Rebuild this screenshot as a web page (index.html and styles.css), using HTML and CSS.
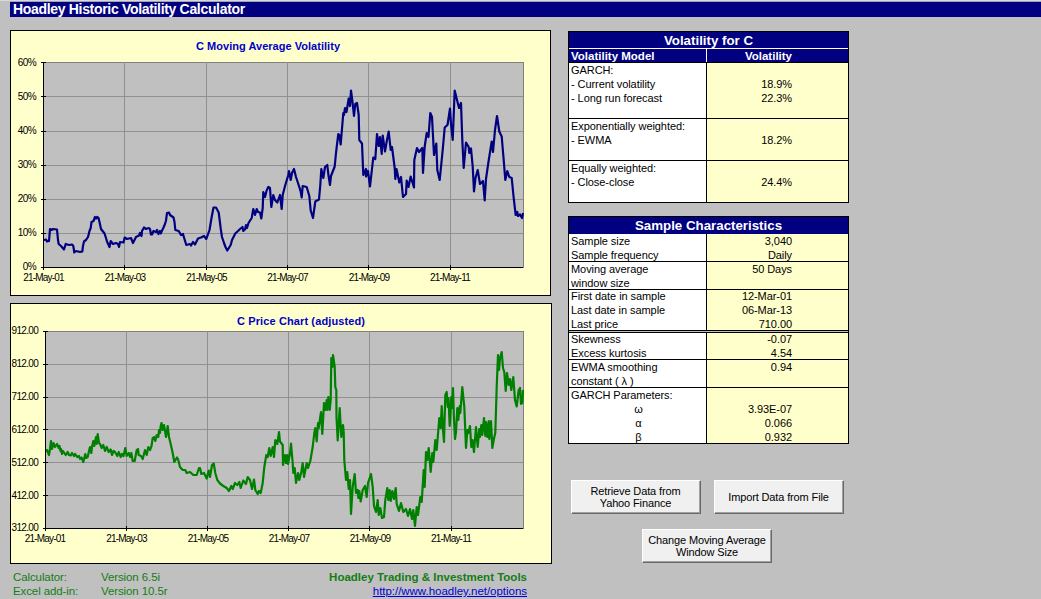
FILE: index.html
```html
<!DOCTYPE html>
<html lang="en">
<head>
    <meta charset="UTF-8">
    <meta name="viewport" content="width=device-width, initial-scale=1.0">
    <title>Hoadley Historic Volatility Calculator</title>
    <link rel="stylesheet" href="styles.css">
</head>

<body>
    <h1 class="page-title"><span>Hoadley Historic Volatility Calculator</span></h1>

    <div class="sheet">
        <!-- Charts and version info -->
        <div class="charts">
            <svg class="chart chart-volatility" viewBox="10 30 541 266">
                <rect class="chart-area" x="10.5" y="30.5" width="540" height="265"/>
                <text class="chart-title" x="196" y="50" textLength="144">C Moving Average Volatility</text>
                <rect class="plot" x="43.5" y="62.5" width="480" height="205"/>
                <path class="grid" d="M43 96.5H523M43 131.5H523M43 165.5H523M43 199.5H523M43 233.5H523M124.5 62V267M206.5 62V267M287.5 62V267M368.5 62V267M450.5 62V267"/>
                <polyline class="line-volatility" points="43.7,240 46,239.5 47,241.5 49,241 50,229 51.5,230 53,229 57,229.5 58,240 58.7,244 61,246 64,249.5 65.7,244 69,245 72,244.5 73.3,246 74.3,252.5 76,251 80,252 82.3,251.5 83,246 84,241.5 86,240 88,237 89.5,231 90.7,228 91.5,222 93.5,221 95,217 96,218.5 97,217 98.5,218 99.5,222 101,229 104.5,233.5 106,238 107,241.5 109.5,247 110.7,241 113,244 116,243 118,244 119,247 120,242 123.5,242.5 124.7,237.5 127,239 131,238 133,243 136,237 139,235.5 140,233 141.5,236 142,231 144,227.5 146,229 149,228 150,229 151,234.5 152,234.5 153.5,231 156,232 157,230 158.5,234 160,231 160.7,233.5 163.5,227.5 165,224 166,220.5 167,213 169,212.5 170,215 173.5,217.5 174.5,222 175.3,230 178.7,231 181,235 183,234 184,237.5 186.3,245 190,244 191,245.5 193,242 195,244.5 198,238.5 201,237.5 204,236 206.3,239 209.5,230 211.5,218 213.5,207.5 216,207.5 218.7,212.5 220.7,228.5 222,237 224,243 225.5,247 227.3,250.5 230.7,245 232,240 235.3,233.5 238,231 240,229 242.5,227 243.3,231 245,229.5 246,225 247,228 248.5,223 251.7,218 253.3,209 255,215 256.7,209 258,212 260,212.5 261.3,218.5 262.7,208 263.3,192 265,197 266.5,191 268.3,187 270,188 271.3,207 273.3,195 275,200 277.3,202.5 280,195 281.7,209 282.7,195 284,190 285.3,185 288.3,175 289,171 290.7,180 292,173 294,169 296,177 298,183 300.7,191.5 301.7,197.5 302.7,186 306.7,187 309.3,196 310.7,210.5 313,218 315.3,201.5 319,199.5 320.3,185 321.3,169 323.3,178 325,167 327.3,165 328.3,174 330,185 331,176 334.7,166.5 336,153 338.3,134 339.3,135 340.7,144.5 343.3,113 344,115 345,108 346.5,112 348.7,98.5 350,106 351,90.5 352.5,102 354,116 355.3,104 357,103 358.7,115 359.3,140 362,143.5 363.3,175 366,169 366,176.5 368,171 370,186.5 373.3,157.5 375.3,159 377,134 378.7,146 380,137 381.7,154 382.7,135.5 385,151.5 386.7,141.5 388.7,131.5 390.7,150 392,147 394.7,168 395.3,179 396.5,169 399.3,182.5 401,177 403,197 406,194 406.7,180.5 408.5,187 410.7,176.5 414,187.5 414.3,160 417,148 419,152 422.3,148 423,173 424.7,146.5 426.7,133 428.5,137 430.3,113 432,117 434,155 436.3,143.5 437.3,170 439.7,180 442.7,150 444.7,127.5 447.5,125 450,108.5 451,124 452.7,140 454.7,90.5 457.5,102 459,108 461,103 462.3,140 463.7,168 466,142.5 468.7,147 469.3,153 471,148.5 472.7,166.5 474,191.5 475.5,178 477.7,170 480,184 483,181 484.7,200.5 486,179 488.3,163 491.7,141.5 493,152 495,130 497,116 499.3,131.5 501.7,136.5 503.7,160 505.3,180 507.3,171 509.3,177 511.7,178 513.7,198 515.7,215 517.3,212 518,216 520,214.5 522,218 523,213"/>
                <path class="axis" d="M43.5 62V267.5H523M41 62.5H46M41 96.5H46M41 131.5H46M41 165.5H46M41 199.5H46M41 233.5H46M41 267.5H46M43.5 265V270M124.5 265V270M206.5 265V270M287.5 265V270M368.5 265V270M450.5 265V270"/>
                <g class="tick tick-y">
                    <text x="36" y="66">60%</text>
                    <text x="36" y="100">50%</text>
                    <text x="36" y="134">40%</text>
                    <text x="36" y="168">30%</text>
                    <text x="36" y="202">20%</text>
                    <text x="36" y="236">10%</text>
                    <text x="36" y="270">0%</text>
                </g>
                <g class="tick tick-x">
                    <text x="43.5" y="281">21-May-01</text>
                    <text x="125" y="281">21-May-03</text>
                    <text x="206.5" y="281">21-May-05</text>
                    <text x="287.5" y="281">21-May-07</text>
                    <text x="369" y="281">21-May-09</text>
                    <text x="450" y="281">21-May-11</text>
                </g>
            </svg>

            <svg class="chart chart-price" viewBox="10 303 542 261">
                <rect class="chart-area" x="10.5" y="303.5" width="541" height="260"/>
                <text class="chart-title" x="237" y="325" textLength="128">C Price Chart (adjusted)</text>
                <rect class="plot" x="45.5" y="331.5" width="478" height="197"/>
                <path class="grid" d="M45 364.5H523M45 397.5H523M45 429.5H523M45 462.5H523M45 495.5H523M126.5 331V528M207.5 331V528M288.5 331V528M369.5 331V528M451.5 331V528"/>
                <polyline class="line-price" points="45.7,451.5 47,450 49,455 50,449 51,441 52,449 53.5,443 55,447 57,444 58.7,448 59.5,446 60.5,451 61,449 62,454 63,451 65.7,455 67.7,452 69,455 70.7,455.5 72,453 74,456 75,454 77.3,457 79,456 80,459 81.5,457.5 83.3,462 85.3,454 86,458 87.7,457 89,451 90,447 91.3,453 92,447 93.3,441 94.3,446 96,437 96.7,444 97.7,434 99,443 100,444 101.7,448 103.3,445 105,451 106.7,447 108.7,452 110.7,449.5 112,455 113.5,451 115,452 117.3,456 118.7,452 120.7,457 122,454 123.5,456 125.3,448 126.7,456 128.7,453 130,457 131.3,453 132.7,461 134.7,461 136.7,450 138,449 138.7,455 141,456 142.7,459 144,454 145,450 146.7,455 148.3,447 150,450 151.5,446 152.7,438 154,437 155.3,441 156.7,435 158.3,437 159,430 160,433 160.7,426 161.5,423 162.7,430 164,425 166,437 167.7,426 169,437 170.7,444 172.7,453 174.3,462 176,459 177,457.5 178.3,460 180,467 182.7,470 185.3,470 186.7,473 190,472 193.3,475 196.7,475 198,471 199,468 200,468 201.3,474 204,473 206.7,478.5 208.7,470.5 210,477 212,465 213.7,463.5 215.3,473 217.3,480 220,483.5 223.3,486 226.7,488 229,491 231.3,486 232.7,489 235,483 237.3,485 239.3,482 240.7,488 243.3,480.5 246,484 247.7,477 250,480 252,489 254,479.5 255.3,490 257.7,494 259,491 260.7,493 262.7,483 264.3,467 266.3,455 267.7,457 269.3,448 270.7,456 272.7,447 274,457 275.3,440 277.3,444 279,432 280,441.5 282.7,445 283,465 285,455 286,463 287.3,455 288,464 290,453 291,443.5 292.7,463 293.3,473 294.7,468 296,483 298,473 299.3,480 301.3,472 302.7,463 304,477 306.7,463 308,468 310.3,461 312.7,447 314.3,433 315.3,428 316.7,441.5 318,423 318.7,428 321,412 322.3,434 324,403 325.3,410 326.7,400 327.3,410 328.3,397 329.7,410 330.7,400 331.3,358 332.3,367 333,355 334.7,367 335.3,387 336.3,390 336.5,417 337.7,440.5 339.7,408 341.3,437 343,425 343.7,432 344.3,460 346,480 347.3,472 348.7,489 350,480 351,514 352.7,487 354.7,474 356,493 357.7,490 358.3,498 359.3,491 360.7,501.5 362.7,490 365,486 366.7,497 368,483 371,474 372.7,487 374,506 376,512 377.7,500 378.7,515 380.3,508 382,518 384,517 385.3,500 387.3,488 388.3,500 389.7,490 390.7,501 392.3,491 394,499 395.7,488 396.7,504 399,511 401,503 403.3,512 406,509 408,516 410,509 412,519 413.3,510 415,526 416.7,507 418,515 420.3,497 421.7,502 423.7,470 424.7,487 426,452 427.3,460 428.7,448 430.7,472 432.3,453 433.3,462 435.3,440 436.7,450 439.3,418 440.7,428 441.7,406 443,430 444,442 445.3,395 446.7,392 447.7,407 448.5,398 449.7,426 451.3,397 452,408 453,388 454,420 455,439 456,432 457.3,408 458.3,420 459.7,406 460.3,413 462.3,387 464.3,407 466,448 467.3,430 468.3,433 470,426 471.3,447 472.5,440 474,452 476,427 477.7,447 479.3,429 480,437 481.3,425 482.3,435 484,418 485.3,436 486,422 487.3,437 488.7,421 489.3,439 491,421 492.3,448 494.3,437 495.3,433 496.7,387 498,355 499,370 500,358 501.7,352 503,368 504.3,372 505.7,391 507,373 508.7,385 510,379 511.3,390 513.3,377 515,400 516.7,406.5 518.7,390 520,388 521,404 522.3,403 523,390"/>
                <path class="axis" d="M45.5 331V528.5H523M43 331.5H48M43 364.5H48M43 397.5H48M43 429.5H48M43 462.5H48M43 495.5H48M43 528.5H48M45.5 526V531M126.5 526V531M207.5 526V531M288.5 526V531M369.5 526V531M451.5 526V531"/>
                <g class="tick tick-y">
                    <text x="38" y="334">912.00</text>
                    <text x="38" y="367">812.00</text>
                    <text x="38" y="400">712.00</text>
                    <text x="38" y="433">612.00</text>
                    <text x="38" y="466">512.00</text>
                    <text x="38" y="499">412.00</text>
                    <text x="38" y="531">312.00</text>
                </g>
                <g class="tick tick-x">
                    <text x="45" y="542">21-May-01</text>
                    <text x="126.5" y="542">21-May-03</text>
                    <text x="208" y="542">21-May-05</text>
                    <text x="289" y="542">21-May-07</text>
                    <text x="370" y="542">21-May-09</text>
                    <text x="451" y="542">21-May-11</text>
                </g>
            </svg>

            <div class="about">
                <div class="about-names">Calculator:<br>Excel add-in:</div>
                <div class="about-versions">Version 6.5i<br>Version 10.5r</div>
                <div class="about-company">
                    <strong>Hoadley Trading &amp; Investment Tools</strong><br>
                    <a href="http://www.hoadley.net/options">http://www.hoadley.net/options</a>
                </div>
            </div>
        </div>

        <!-- Results and buttons -->
        <div class="results">
            <div class="panel panel-volatility">
                <h2>Volatility for C</h2>
                <div class="panel-head">
                    <div class="name">Volatility Model</div>
                    <div class="value">Volatility</div>
                </div>
                <div class="group lines-4">
                    <div class="name">GARCH:<br>- Current volatility<br>- Long run forecast</div>
                    <div class="value"><br>18.9%<br>22.3%</div>
                </div>
                <div class="group lines-3">
                    <div class="name">Exponentially weighted:<br>- EWMA</div>
                    <div class="value"><br>18.2%</div>
                </div>
                <div class="group lines-3">
                    <div class="name">Equally weighted:<br>- Close-close</div>
                    <div class="value"><br>24.4%</div>
                </div>
            </div>

            <div class="panel panel-sample">
                <h2>Sample Characteristics</h2>
                <div class="group lines-2">
                    <div class="name">Sample size<br>Sample frequency</div>
                    <div class="value">3,040<br>Daily</div>
                </div>
                <div class="group lines-2">
                    <div class="name">Moving average<br>window size</div>
                    <div class="value">50 Days</div>
                </div>
                <div class="group group-dates">
                    <div class="name">First date in sample<br>Last date in sample<br>Last price</div>
                    <div class="value">12-Mar-01<br>06-Mar-13<br>710.00</div>
                </div>
                <div class="group group-shape">
                    <div class="name">Skewness<br>Excess kurtosis</div>
                    <div class="value">-0.07<br>4.54</div>
                </div>
                <div class="group lines-2">
                    <div class="name">EWMA smoothing<br>constant ( λ )</div>
                    <div class="value">0.94</div>
                </div>
                <div class="group lines-4">
                    <div class="name">GARCH Parameters:<div class="greek">ω<br>α<br>β</div></div>
                    <div class="value"><br>3.93E-07<br>0.066<br>0.932</div>
                </div>
            </div>

            <div class="button-group">
                <button>Retrieve Data from<br>Yahoo Finance</button>
                <button>Import Data from File</button>
                <button>Change Moving Average<br>Window Size</button>
            </div>
        </div>
    </div>
</body>
</html>
```

FILE: styles.css
```css
* {
    box-sizing: border-box;
}

body {
    margin: 0;
    height: 599px;
    overflow: hidden;
    background: #c0c0c0;
    font: 11px/14px "Liberation Sans", Arial, sans-serif;
    color: #000;
}

/* Title bar */
.page-title {
    margin: 0;
    padding-left: 10px;
    border-top: 1px solid #d9d9d9;
    font-size: 14px;
    line-height: 15px;
    letter-spacing: -0.32px;
}

.page-title span {
    display: block;
    height: 16px;
    padding-left: 3px;
    border-top: 1px solid #a0a4b4;
    background: #000080;
    color: #fff;
}

.sheet {
    display: flex;
    padding-left: 10px;
}

.charts {
    width: 542px;
    margin: 13px 16px 0 0;
}

/* Charts */
.chart {
    display: block;
}

.chart-volatility {
    width: 541px;
    height: 266px;
    margin-bottom: 7px;
}

.chart-price {
    width: 542px;
    height: 261px;
}

.chart rect,
.grid,
.axis {
    shape-rendering: crispEdges;
}

.chart-area {
    fill: #ffffcc;
    stroke: #000;
}

.chart-title {
    font-size: 11px;
    font-weight: bold;
    fill: #0000c8;
}

.plot {
    fill: #c0c0c0;
    stroke: #808080;
}

.grid {
    stroke: #909090;
}

.axis {
    fill: none;
    stroke: #000;
}

.line-volatility,
.line-price {
    fill: none;
    stroke-width: 2.2;
    stroke-linejoin: round;
}

.line-volatility {
    stroke: #000080;
}

.line-price {
    stroke: #008000;
}

.tick {
    font-size: 10px;
}

.tick-y {
    text-anchor: end;
    letter-spacing: -0.6px;
}

.chart-price .tick-y {
    letter-spacing: -0.7px;
}

.tick-x {
    text-anchor: middle;
    letter-spacing: -0.8px;
}

/* Version info */
.about {
    display: flex;
    padding: 6px 25px 0 3px;
    color: #147d14;
    font-size: 11.5px;
}

.about-names,
.about-versions {
    letter-spacing: -0.1px;
}

.about-names {
    width: 88px;
}

.about-company {
    margin-left: auto;
    text-align: right;
}

.about-company a {
    color: #0000d8;
    letter-spacing: -0.03px;
}

/* Result panels */
.results {
    width: 281px;
    margin-top: 14px;
}

.panel {
    border: solid #000;
    border-width: 1px 1px 0;
    margin-bottom: 13px;
}

.panel h2 {
    margin: 0;
    height: 17px;
    border-bottom: 1px solid #fff;
    background: #000080;
    color: #fff;
    font-size: 13.3px;
    line-height: 17px;
    text-align: center;
}

.panel-sample h2 {
    border-bottom-color: #000080;
}

.panel-head,
.group {
    display: flex;
    border-bottom: 1px solid #000;
}

.group {
    letter-spacing: -0.07px;
}

.panel-head {
    height: 14px;
    background: #000080;
    color: #fff;
    font-size: 11.5px;
    font-weight: bold;
}

.name {
    width: 137px;
    padding-left: 2px;
    background: #fff;
}

.value {
    flex: 1;
    padding-right: 56px;
    border-left: 1px solid #000;
    background: #ffffcc;
    text-align: right;
}

.panel-head .name,
.panel-head .value {
    background: none;
    border-color: #fff;
}

.lines-2 { height: 28px; }
.lines-3 { height: 42px; }
.lines-4 { height: 56px; }

.group-dates {
    height: 43px;
    border-bottom: 3px double #000;
    line-height: 13.8px;
}

.group-shape {
    height: 27px;
    line-height: 13.5px;
}

.greek {
    text-align: center;
}

/* Buttons */
.button-group {
    display: flex;
    flex-wrap: wrap;
    justify-content: center;
    gap: 15px 13px;
    margin-top: 36px;
    padding-right: 3px;
}

.button-group button {
    width: 130px;
    height: 34px;
    padding: 0 0 1px;
    border: 1px solid;
    border-color: #fff #696969 #696969 #fff;
    box-shadow: inset -1px -1px #a0a0a0;
    background: #f0f0f0;
    color: #000;
    font: 11px/12px "Liberation Sans", Arial, sans-serif;
    letter-spacing: -0.13px;
}
```
